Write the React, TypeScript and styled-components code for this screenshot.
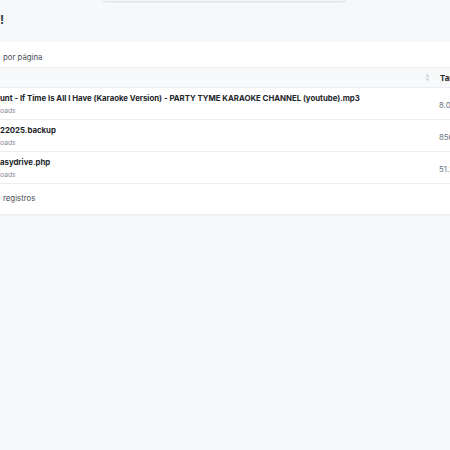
import React from "react";
import styled, { createGlobalStyle } from "styled-components";

const GlobalStyle = createGlobalStyle`
  html, body {
    margin: 0;
    padding: 0;
    background: #f7f8fa;
    overflow: hidden;
  }
  #root {
    width: 450px;
    height: 450px;
    overflow: hidden;
    font-family: Inter, "Noto Sans", sans-serif;
    color: #212529;
  }
`;

const Header = styled.header`
  position: relative;
  height: 42px;
  display: flex;
  align-items: center;
  padding-bottom: 2px;
  box-sizing: border-box;
`;

const Title = styled.h1`
  margin: 0;
  font-size: 12px;
  font-weight: 700;
  color: #343a40;
  line-height: 1;
`;

const MenuEdge = styled.div`
  position: absolute;
  top: -20px;
  left: 103px;
  width: 243px;
  height: 21px;
  background: #f7f8fa;
  border-radius: 0 0 3px 3px;
  box-shadow: 0 1px 2px rgba(0, 0, 0, 0.12);
`;

const Card = styled.section`
  background: #fff;
  border-bottom: 1px solid #eceef1;
  box-shadow: 0 1px 1px rgba(0, 0, 0, 0.03);
`;

const LengthBar = styled.div`
  height: 25px;
  box-sizing: border-box;
  display: flex;
  align-items: flex-end;
  padding: 0 0 5px 3px;
  font-size: 7.8px;
  line-height: 10px;
  color: #495057;
`;

const Row = styled.div<{ $head?: boolean }>`
  display: grid;
  grid-template-columns: 433px 1fr;
  height: ${(p) => (p.$head ? "20px" : "32px")};
  box-sizing: border-box;
  border-top: 1px solid #eceef1;
  background: ${(p) => (p.$head ? "#f8f9fa" : "#fff")};
`;

const NameCell = styled.div<{ $head?: boolean }>`
  display: flex;
  flex-direction: column;
  justify-content: ${(p) => (p.$head ? "center" : "flex-start")};
  align-items: ${(p) => (p.$head ? "flex-end" : "flex-start")};
  padding: ${(p) => (p.$head ? "0 3px 0 0" : "5px 0 0 0")};
  overflow: hidden;
  white-space: nowrap;
`;

const FileName = styled.span`
  font-size: 7.8px;
  font-weight: 700;
  color: #212529;
  line-height: 10px;
`;

const Folder = styled.span`
  font-size: 6.8px;
  color: #8a9099;
  line-height: 10px;
  margin-top: 3px;
`;

const SizeCell = styled.div<{ $head?: boolean }>`
  display: flex;
  align-items: center;
  padding: ${(p) => (p.$head ? "0 0 0 7px" : "2px 0 0 6px")};
  font-size: 7.8px;
  font-weight: ${(p) => (p.$head ? 700 : 400)};
  color: ${(p) => (p.$head ? "#212529" : "#6c757d")};
  white-space: nowrap;
`;

const Footer = styled.div`
  height: 31px;
  box-sizing: border-box;
  border-top: 1px solid #eceef1;
  display: flex;
  align-items: center;
  padding: 0 0 2px 3px;
  font-size: 7.8px;
  color: #495057;
`;

const SortIcon = () => (
  <svg width="5" height="9" viewBox="0 0 5 9">
    <path d="M2.5 0.5 L4.5 3.8 L0.5 3.8 Z" fill="#d3d6da" />
    <path d="M2.5 8.5 L4.5 5.2 L0.5 5.2 Z" fill="#d3d6da" />
  </svg>
);

const files = [
  {
    name: "unt - If Time Is All I Have (Karaoke Version) - PARTY TYME KARAOKE CHANNEL (youtube).mp3",
    folder: "oads",
    size: "8.02 MB",
  },
  { name: "22025.backup", folder: "oads", size: "856 KB" },
  { name: "asydrive.php", folder: "oads", size: "51.2 KB" },
];

export default function App() {
  return (
    <>
      <GlobalStyle />
      <Header>
        <MenuEdge />
        <Title>!</Title>
      </Header>
      <Card>
        <LengthBar>por página</LengthBar>
        <Row $head>
          <NameCell $head>
            <SortIcon />
          </NameCell>
          <SizeCell $head>Tamanho</SizeCell>
        </Row>
        {files.map((f) => (
          <Row key={f.name}>
            <NameCell>
              <FileName>{f.name}</FileName>
              <Folder>{f.folder}</Folder>
            </NameCell>
            <SizeCell>{f.size}</SizeCell>
          </Row>
        ))}
        <Footer>registros</Footer>
      </Card>
    </>
  );
}
